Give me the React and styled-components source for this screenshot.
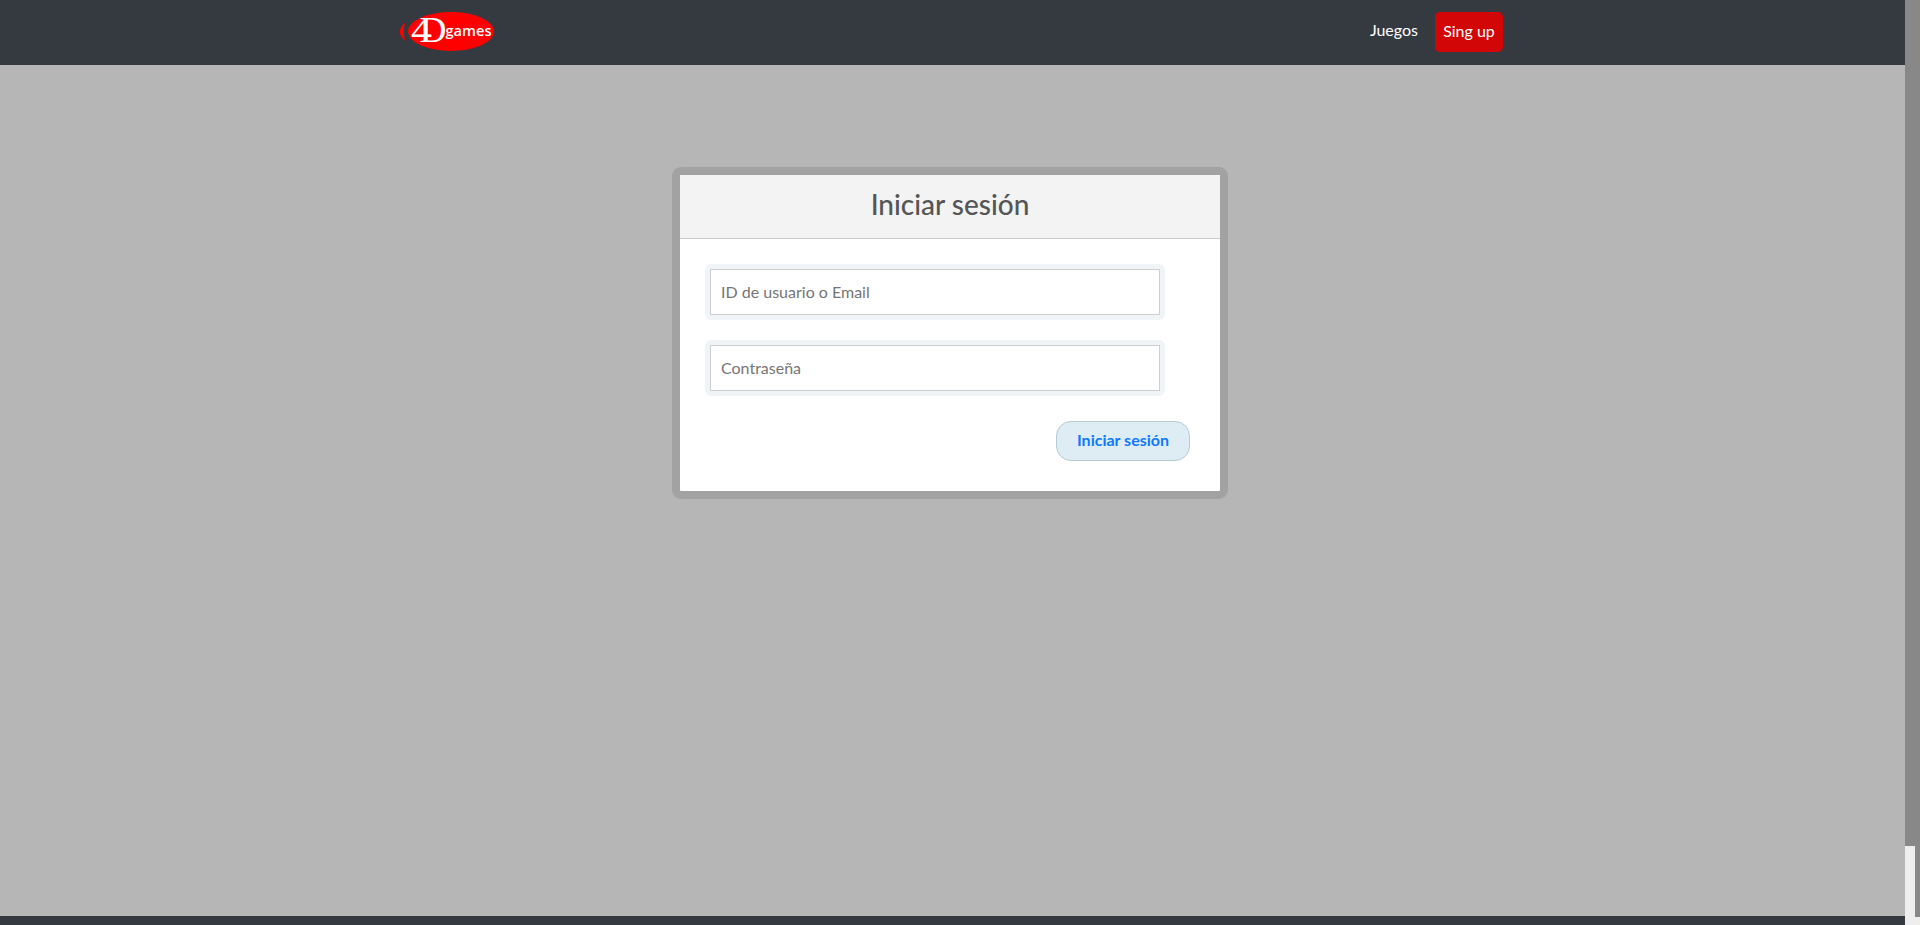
import React from 'react';
import styled, { createGlobalStyle } from 'styled-components';

const GlobalStyle = createGlobalStyle`
  *, *::before, *::after { box-sizing: border-box; }
  body { margin: 0; overflow: hidden; font: 400 16px/24px Lato, sans-serif; background: #b6b6b6; }
`;

const Shell = styled.div`
  display: flex;
  height: 100vh;
`;

const Page = styled.div`
  flex: 1;
  display: flex;
  flex-direction: column;
`;

const Navbar = styled.header`
  height: 65px;
  background: #343a40;
  display: flex;
  justify-content: space-between;
  align-items: flex-start;
  padding: 12px 402px 0 399px;
`;

const Logo = styled.svg`
  display: block;
  width: 96px;
  height: 40px;
  overflow: visible;
`;

const Nav = styled.nav`
  display: flex;
  gap: 17px;
  color: #fff;
`;

const NavLink = styled.a`
  padding-top: 6px;
`;

const SignUp = styled.a`
  width: 68px;
  height: 40px;
  border-radius: 5px;
  background: #d20606;
  text-align: center;
  line-height: 38px;
`;

const Main = styled.main`
  flex: 1;
  padding: 102px 0 0 672px;
`;

const Card = styled.section`
  width: 556px;
  height: 332px;
  border: 8px solid #a2a2a2;
  border-radius: 9px;
  background: #fff;
`;

const CardTitle = styled.h1`
  margin: 0;
  height: 64px;
  border-bottom: 1px solid #cacaca;
  background: #f3f3f3;
  color: #555;
  font-size: 28px;
  font-weight: 500;
  line-height: 58px;
  text-align: center;
`;

const Form = styled.form`
  display: flex;
  flex-direction: column;
  align-items: flex-start;
  gap: 20px;
  padding: 25px 30px 25px 25px;
`;

const FieldRing = styled.div`
  display: flex;
  padding: 5px;
  border-radius: 6px;
  background: #eff4f7;
`;

const Field = styled.input`
  width: 450px;
  height: 46px;
  padding: 0 10px 2px;
  border: 1px solid #cbcfd0;
  border-radius: 0;
  background: #fff;
  font: inherit;
  outline: 0;
  &::placeholder { color: #757575; opacity: 1; }
`;

const Submit = styled.button`
  align-self: flex-end;
  width: 134px;
  height: 40px;
  margin-top: 5px;
  padding: 0 0 2px;
  border: 1px solid #b4ccce;
  border-radius: 15px;
  background: #deedf4;
  color: #0f79ff;
  font: 700 16px/24px Lato, sans-serif;
`;

const Footer = styled.footer`
  height: 9px;
  background: #343a40;
`;

const Scrollbar = styled.div`
  width: 15px;
  display: flex;
  flex-direction: column;
  background: #eee;
`;

const Thumb = styled.div`
  height: 846px;
  background: #888;
`;

const TrackEdge = styled.div`
  height: 71px;
  border-right: 5px solid #888;
`;

export default function App() {
  return (
    <Shell>
      <GlobalStyle />
      <Page>
        <Navbar>
          <Logo viewBox="0 0 96 40" role="img" aria-label="4D games">
            <path d="M6.200 10.800Q-4.500 19.500 6.200 28.800Q3.200 19.500 6.200 10.800Z" fill="#f00" />
            <ellipse cx="52" cy="19.500" rx="43" ry="19.500" fill="#f00" />
            <text x="12" y="29.700" fill="#fff" fontFamily="Liberation Serif, serif" fontSize="35">
              <tspan textLength="21" lengthAdjust="spacingAndGlyphs">4</tspan>
              <tspan x="20.500" textLength="27" lengthAdjust="spacingAndGlyphs">D</tspan>
            </text>
            <text x="46.500" y="23.700" fill="#fff" fontFamily="Open Sans, sans-serif" fontSize="15" fontWeight="600" textLength="46" lengthAdjust="spacingAndGlyphs">games</text>
          </Logo>
          <Nav>
            <NavLink>Juegos</NavLink>
            <SignUp>Sing up</SignUp>
          </Nav>
        </Navbar>
        <Main>
          <Card>
            <CardTitle>Iniciar sesión</CardTitle>
            <Form>
              <FieldRing>
                <Field type="text" placeholder="ID de usuario o Email" />
              </FieldRing>
              <FieldRing>
                <Field type="password" placeholder="Contraseña" />
              </FieldRing>
              <Submit type="button">Iniciar sesión</Submit>
            </Form>
          </Card>
        </Main>
        <Footer />
      </Page>
      <Scrollbar>
        <Thumb />
        <TrackEdge />
      </Scrollbar>
    </Shell>
  );
}
